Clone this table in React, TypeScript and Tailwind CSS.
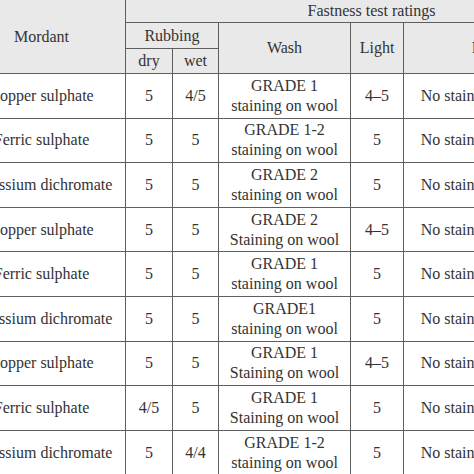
const rows = [
  { mordant: "Copper sulphate", dry: "5", wet: "4/5", grade: "GRADE 1", note: "staining on wool", light: "4–5" },
  { mordant: "Ferric sulphate", dry: "5", wet: "5", grade: "GRADE 1-2", note: "staining on wool", light: "5" },
  { mordant: "Potassium dichromate", dry: "5", wet: "5", grade: "GRADE 2", note: "staining on wool", light: "5" },
  { mordant: "Copper sulphate", dry: "5", wet: "5", grade: "GRADE 2", note: "Staining on wool", light: "4–5" },
  { mordant: "Ferric sulphate", dry: "5", wet: "5", grade: "GRADE 1", note: "staining on wool", light: "5" },
  { mordant: "Potassium dichromate", dry: "5", wet: "5", grade: "GRADE1", note: "staining on wool", light: "5" },
  { mordant: "Copper sulphate", dry: "5", wet: "5", grade: "GRADE 1", note: "Staining on wool", light: "4–5" },
  { mordant: "Ferric sulphate", dry: "4/5", wet: "5", grade: "GRADE 1", note: "Staining on wool", light: "5" },
  { mordant: "Potassium dichromate", dry: "5", wet: "4/4", grade: "GRADE 1-2", note: "staining on wool", light: "5" },
]

// cells get the font themselves: tables don't inherit it in quirks mode
const base =
  "border border-[#5e5e5e] p-0 text-center align-middle font-normal whitespace-nowrap [font-family:Liberation_Serif,DejaVu_Serif,serif] text-[16px] leading-[20px] text-[#333333]"

export default function App() {
  return (
    <div className="w-[474px] h-[474px] overflow-hidden bg-white">
      <table className="ml-[-43px] mt-[-1px] w-[660px] border-collapse table-fixed">
        <colgroup>
          <col className="w-[168px]" />
          <col className="w-[47px]" />
          <col className="w-[46px]" />
          <col className="w-[132px]" />
          <col className="w-[53px]" />
          <col className="w-[214px]" />
        </colgroup>
        <thead className="bg-[#e9e9e9]">
          <tr className="h-[23px]">
            <th rowSpan={3} className={base}>Mordant</th>
            <th colSpan={5} className={base}>Fastness test ratings</th>
          </tr>
          <tr className="h-[26px]">
            <th colSpan={2} className={base}>Rubbing</th>
            <th rowSpan={2} className={base}>Wash</th>
            <th rowSpan={2} className={base}>Light</th>
            <th rowSpan={2} className={base}>Perspiration</th>
          </tr>
          <tr className="h-[25px]">
            <th className={base}>dry</th>
            <th className={base}>wet</th>
          </tr>
        </thead>
        <tbody>
          {rows.map((row, i) => (
            <tr key={i} className="h-[44.6px]">
              <td className={base}>{row.mordant}</td>
              <td className={base}>{row.dry}</td>
              <td className={base}>{row.wet}</td>
              <td className={base}>
                {row.grade}
                <br />
                {row.note}
              </td>
              <td className={base}>{row.light}</td>
              <td className={base}>No staining on cotton fabric</td>
            </tr>
          ))}
        </tbody>
      </table>
    </div>
  )
}
